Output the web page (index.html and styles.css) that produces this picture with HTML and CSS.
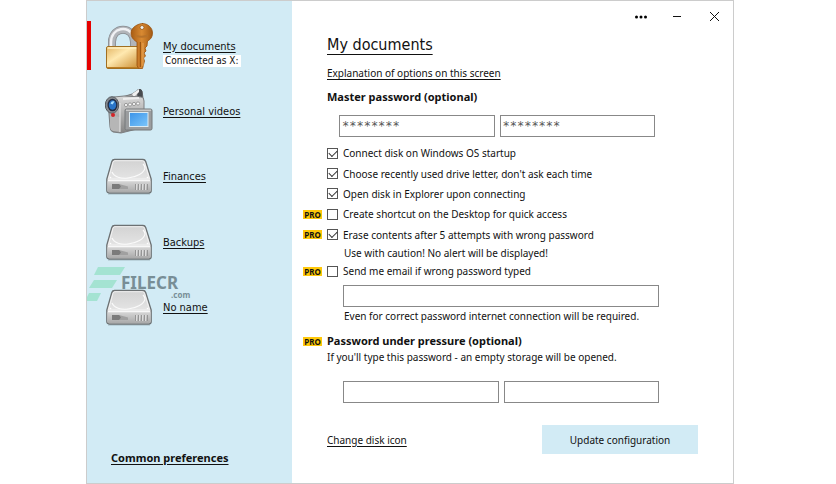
FILE: index.html
```html
<!DOCTYPE html>
<html lang="en">
<head>
<meta charset="utf-8">
<meta name="viewport" content="width=device-width, initial-scale=1">
<title>My documents</title>
<link rel="stylesheet" href="styles.css">
</head>
<body>
<svg class="defs" aria-hidden="true">
  <defs>
    <linearGradient id="diskTop" x1="0" y1="0" x2="0" y2="1"><stop offset="0" stop-color="#d2d2d2"/><stop offset="1" stop-color="#f1f1f1"/></linearGradient>
    <linearGradient id="diskFront" x1="0" y1="0" x2="0" y2="1"><stop offset="0" stop-color="#dadada"/><stop offset="1" stop-color="#a9a9a9"/></linearGradient>
    <linearGradient id="brass" x1="0" y1="0" x2="1" y2="1"><stop offset="0" stop-color="#e2b463"/><stop offset=".4" stop-color="#ffe9b0"/><stop offset="1" stop-color="#c98a2e"/></linearGradient>
    <linearGradient id="keyMetal" x1="0" y1="0" x2="1" y2="0"><stop offset="0" stop-color="#a95d14"/><stop offset=".5" stop-color="#d98a32"/><stop offset="1" stop-color="#a35a14"/></linearGradient>
    <linearGradient id="camBody" x1="0" y1="0" x2="0" y2="1"><stop offset="0" stop-color="#d9d9d9"/><stop offset="1" stop-color="#858585"/></linearGradient>
    <linearGradient id="camScreen" x1="0" y1="0" x2="1" y2="1"><stop offset="0" stop-color="#3b93e8"/><stop offset="1" stop-color="#7cc6fb"/></linearGradient>
    <symbol id="disk" viewBox="0 0 48 48">
      <path d="M3 42h42" stroke="#9bb1b8" stroke-width="2" opacity=".4"/>
      <path d="M9.500 7.500h28.500q2 0 2.700 2l5.500 17.500v11.500q0 2.500-2.500 2.500H4.300q-2.500 0-2.500-2.500V27l5-17.500q.700-2 2.700-2z" fill="url(#diskTop)" stroke="#6c7173" stroke-width="1.300"/>
      <path d="M10 8.700h27.500q1.500 0 2 1.600l5 16.700h-41l4.500-16.700q.500-1.600 2-1.600z" fill="none" stroke="#f2f2f2"/>
      <path d="M7 20c2 5 9 7 16 6 9-1 16-5 17-10 0-2-1-3-2-4" fill="none" stroke="#fafafa" stroke-width="1.200"/>
      <path d="M2.500 29.500q0-1.500 1.500-1.500h40q1.500 0 1.500 1.500v9q0 1.800-1.800 1.800H4.300q-1.800 0-1.800-1.800z" fill="url(#diskFront)"/>
      <path d="M3 28.700h42" stroke="#fff"/>
      <path d="M7 32h7l9 2.500v2.500H7z" fill="#a0a0a0"/><path d="M7 32h7l2 2.500-2 2.500H7z" fill="#7b7b7b"/>
      <path d="M30.500 32v6m3-6v6m3-6v6m3-6v6m3-6v6" stroke="#959595"/>
      <path d="M31.500 32v6m3-6v6m3-6v6m3-6v6" stroke="#dcdcdc"/>
      <circle cx="5.500" cy="25.500" r=".8" fill="#fff"/><circle cx="42.500" cy="25.500" r=".8" fill="#fff"/>
    </symbol>
  </defs>
</svg>
<div class="window">
  <nav class="sidebar" aria-label="Storages">
    <ul class="storages">
      <li class="storage active">
        <svg class="icon" viewBox="0 0 48 48" aria-hidden="true">
          <path d="M7 27V20C7 3.500 29 3.500 29 20v7" fill="none" stroke="#85898e" stroke-width="8"/>
          <path d="M7 27V20C7 3.500 29 3.500 29 20v7" fill="none" stroke="#b2b5ba" stroke-width="6.500"/>
          <path d="M6 26V20C6.500 5 24 3 28 14" fill="none" stroke="#f0f1f4" stroke-width="2.500"/>
          <rect x="1.500" y="24.500" width="33" height="22" rx="1.500" fill="url(#brass)" stroke="#a06f22"/>
          <path d="M2.500 26h32" stroke="#fff0c0" stroke-width="1.500"/><path d="M2 45.500h33" stroke="#bd7d22"/>
          <path d="M37 1.500c6 0 10.500 4.300 10.500 9.500 0 4-2 6.700-5 8l-.500 5-2 2 1 3-2 2 1.500 3-2 2 1 3-2 7.500h-4l-1.500-3V20c-3.500-2-6-5-6-9 0-5.500 7-9.500 12-9.500z" fill="url(#keyMetal)" stroke="#99500d" stroke-width=".8"/>
          <path d="M35.300 20v25" stroke="#8f4b0c"/><path d="M38 21v23" stroke="#e7a457"/>
          <circle cx="37" cy="5.500" r="2" fill="#eef4f4" stroke="#9a5412" stroke-width=".8"/>
          <path d="M31 14q7 1.500 12-.500" fill="none" stroke="#b8732a" stroke-width="2"/>
        </svg>
        <span class="label"><a href="#documents">My documents</a><span class="status">Connected as X:</span></span>
      </li>
      <li class="storage">
        <svg class="icon" viewBox="0 0 48 48" aria-hidden="true">
          <path d="M14 11 27 7l6-4q3-1.500 4 1l1 7v9H16z" fill="#a5a5a5" stroke="#77797b"/>
          <path d="M32 3q5-3 5.500 3v7q-3 1-5-2z" fill="#484b4f"/><path d="M27 7 34 2v3l-5 5z" fill="#f1f1f1"/>
          <path d="M3 14q1-3 6-4l10-1 17 1q3 0 3 4v24q-2 4-7 4l-16 4-8-1q-3-1-3-5z" fill="url(#camBody)" stroke="#7c7e80"/>
          <path d="M5 28 15 30v15l-7-1q-3-1-3-5z" fill="#b6b6b6"/>
          <path d="M15 16v29" stroke="#e9e9e9"/><path d="M18 12l16-1" stroke="#eee" stroke-width="2"/>
          <ellipse cx="7" cy="18" rx="6.700" ry="8.300" fill="#85898e" stroke="#54585d"/>
          <ellipse cx="7.500" cy="18" rx="5" ry="6.300" fill="#222d45"/>
          <ellipse cx="7.500" cy="18" rx="3.700" ry="4.700" fill="#2874c8"/>
          <path d="M5.500 16.500q1-3 4-2l-2 3z" fill="#a9e0ff"/>
          <circle cx="8" cy="28" r="2" fill="#d22428"/>
          <g fill="#f8f8f8" stroke="#818181" stroke-width=".7"><circle cx="21" cy="18" r="1.600"/><circle cx="25" cy="17.500" r="1.600"/><circle cx="29" cy="17" r="1.600"/><circle cx="33" cy="16.500" r="1.600"/></g>
          <path d="M20 23.500q0-1.500 1.500-1.500h24q1.500 0 1.500 1.500v18q0 1.500-1.500 1.500h-24q-1.500 0-1.500-1.500z" fill="#9b9d9f" stroke="#75787a"/>
          <path d="M21 23.200h25" stroke="#ddd"/>
          <rect x="24.500" y="25.500" width="18.500" height="14" fill="url(#camScreen)" stroke="#dcebf3"/>
        </svg>
        <span class="label"><a href="#videos">Personal videos</a></span>
      </li>
      <li class="storage"><svg class="icon" aria-hidden="true"><use href="#disk"/></svg><span class="label"><a href="#finances">Finances</a></span></li>
      <li class="storage"><svg class="icon" aria-hidden="true"><use href="#disk"/></svg><span class="label"><a href="#backups">Backups</a></span></li>
      <li class="storage"><svg class="icon" aria-hidden="true"><use href="#disk"/></svg><span class="label"><a href="#noname">No name</a></span></li>
    </ul>
    <a class="preferences" href="#preferences">Common preferences</a>
    <div class="watermark">
      <svg class="watermark-logo" viewBox="0 0 38 34" aria-hidden="true"><path d="M11 0h27l-5 8H7zM7 13h23l-5 8H2zM2 26h12l-4 8H-2z"/></svg>
      <span class="watermark-text"><span class="watermark-name">FILECR</span><span class="watermark-domain">.com</span></span>
    </div>
  </nav>

  <main class="content">
    <header class="controls">
      <button type="button" aria-label="More"><svg viewBox="0 0 12 12"><circle cx="1.500" cy="6" r="1.500"/><circle cx="6" cy="6" r="1.500"/><circle cx="10.500" cy="6" r="1.500"/></svg></button>
      <button type="button" aria-label="Minimize"><svg viewBox="0 0 12 12"><path d="M1 5.500h8"/></svg></button>
      <button type="button" aria-label="Close"><svg viewBox="0 0 12 12"><path d="m1 1 9 9M10 1 1 10"/></svg></button>
    </header>
    <form class="settings">
      <h1><a href="#title">My documents</a></h1>
      <a class="explain" href="#help">Explanation of options on this screen</a>
      <h2>Master password (optional)</h2>
      <div class="pair master">
        <input class="field" type="text" placeholder="********" aria-label="Master password">
        <input class="field" type="text" placeholder="********" aria-label="Repeat master password">
      </div>
      <div class="options">
        <div class="option"><input type="checkbox" id="startup" checked><label for="startup">Connect disk on Windows OS startup</label></div>
        <div class="option"><input type="checkbox" id="letter" checked><label for="letter">Choose recently used drive letter, don't ask each time</label></div>
        <div class="option"><input type="checkbox" id="explorer" checked><label for="explorer">Open disk in Explorer upon connecting</label></div>
        <div class="option"><span class="pro">PRO</span><input type="checkbox" id="shortcut"><label for="shortcut">Create shortcut on the Desktop for quick access</label></div>
        <div class="option"><span class="pro">PRO</span><input type="checkbox" id="erase" checked><label for="erase">Erase contents after 5 attempts with wrong password</label></div>
      </div>
      <p class="note indented">Use with caution! No alert will be displayed!</p>
      <div class="option"><span class="pro">PRO</span><input type="checkbox" id="email"><label for="email">Send me email if wrong password typed</label></div>
      <div class="pair"><input class="field" type="email" aria-label="Email address"></div>
      <p class="note indented">Even for correct password internet connection will be required.</p>
      <div class="pressure"><span class="pro">PRO</span><h2>Password under pressure (optional)</h2></div>
      <p class="note">If you'll type this password - an empty storage will be opened.</p>
      <div class="pair duress">
        <input class="field" type="password" aria-label="Password under pressure">
        <input class="field" type="password" aria-label="Repeat password under pressure">
      </div>
      <footer class="actions">
        <a href="#icon">Change disk icon</a>
        <button type="submit">Update configuration</button>
      </footer>
    </form>
  </main>
</div>
</body>
</html>
```
FILE: styles.css
```css
* { box-sizing: border-box; }

body {
  margin: 0;
  background: #fff;
  color: #111;
  font: 10px/16px "Noto Sans", sans-serif;
}

a { color: inherit; text-underline-offset: 2px; }
h1, h2, p, ul { margin: 0; padding: 0; }
.defs { position: absolute; width: 0; height: 0; }

.window {
  display: flex;
  min-height: 100vh;
  margin: 0 102px 0 86px;
  border: 1px solid #ccc;
}

.sidebar {
  position: relative;
  display: flex;
  flex: 0 0 205px;
  flex-direction: column;
  justify-content: space-between;
  padding: 12px 0 17px;
  background: #d2ebf5;
}

.storages {
  display: grid;
  grid-template-rows: repeat(5, 1fr);
  min-height: 327px;
  list-style: none;
}

.storage {
  position: relative;
  display: flex;
  align-items: center;
  gap: 10px;
  padding-left: 18px;
  font-family: "DejaVu Sans Condensed", "DejaVu Sans", sans-serif;
  font-size: 11px;
}

.storage.active::before {
  content: "";
  position: absolute;
  left: 0;
  width: 4px;
  height: 49px;
  background: #e60000;
}

.icon { width: 48px; height: 48px; }
.label { position: relative; padding-top: 2px; }

.status {
  position: absolute;
  top: 100%;
  left: 0;
  padding: 0 2px;
  background: #fff;
  font-size: 10px;
  line-height: 12px;
  white-space: nowrap;
}

.preferences { padding-left: 24px; font-size: 11px; font-weight: bold; }

.watermark {
  position: absolute;
  top: 266px;
  left: 0;
  display: flex;
  color: #62777f;
  opacity: .8;
  pointer-events: none;
}

.watermark-logo { width: 38px; height: 34px; fill: #99e2ca; }

.watermark-text {
  display: flex;
  flex-direction: column;
  margin: 8px 0 0 -4px;
  font-weight: bold;
}

.watermark-name { font-size: 17px; line-height: 16px; }
.watermark-domain { padding-left: 50px; font-size: 8px; line-height: 8px; }

.content { flex: 1; min-width: 0; }

.controls {
  display: flex;
  justify-content: flex-end;
  gap: 24px;
  height: 32px;
  padding-right: 12px;
}

.controls button {
  display: grid;
  place-items: center;
  width: 13px;
  padding: 0;
  border: 0;
  background: none;
}

.controls svg { width: 12px; height: 12px; }
.controls path { fill: none; stroke: #111; }

.settings { padding: 0 35px; }

h1 { font: 16px/24px "DejaVu Sans Condensed", "DejaVu Sans", sans-serif; }
h1 a { text-underline-offset: 4px; text-decoration-thickness: 1px; }
h2 { font-size: 11px; line-height: 16px; }
.explain { display: block; margin: 8px 0; }

.pair {
  display: flex;
  gap: 5px;
  margin: 4px 39px 1px 16px;
}

.pair.master { margin: 10px 43px 6px 12px; }
.pair.duress { margin-top: 16px; margin-bottom: 22px; }

.field {
  flex: 1;
  min-width: 0;
  height: 22px;
  padding: 0 2px;
  border: 1px solid #888;
  background: #fff;
  font: 12px/16px "DejaVu Sans Mono", monospace;
}

.field::placeholder { color: #555; opacity: 1; }

.options {
  display: grid;
  grid-template-rows: repeat(5, 1fr);
  min-height: 102px;
}

.option, .pressure {
  position: relative;
  display: flex;
  align-items: center;
  gap: 5px;
  min-height: 20px;
}

.pressure { min-height: 16px; margin-top: 9px; }

.pro {
  position: absolute;
  left: -24px;
  width: 19px;
  background: #ffc80a;
  font: bold 8px/9px "Noto Sans", sans-serif;
  text-align: center;
}

.option input {
  display: grid;
  place-items: center;
  width: 11px;
  height: 11px;
  margin: 0;
  border: 1px solid #555;
  background: #fff;
  appearance: none;
}

.option input:checked::before {
  content: "";
  width: 7px;
  height: 4px;
  margin-bottom: 2px;
  border: solid #333;
  border-width: 0 0 1px 1px;
  transform: rotate(-45deg);
}

.note.indented { padding-left: 17px; }

.actions {
  display: flex;
  align-items: center;
  justify-content: space-between;
}

.actions button {
  width: 156px;
  height: 29px;
  border: 0;
  background: #d2ebf5;
  color: inherit;
  font: inherit;
}
```
